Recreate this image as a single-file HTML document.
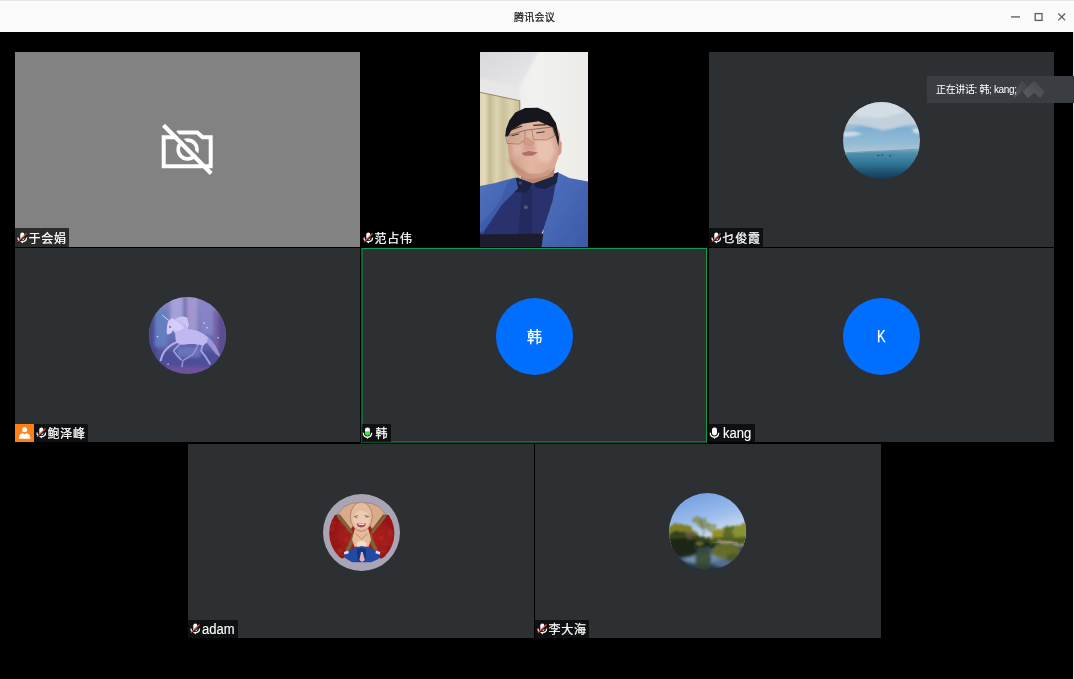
<!DOCTYPE html>
<html lang="zh-CN">
<head>
<meta charset="utf-8">
<title>腾讯会议</title>
<style>
*{box-sizing:border-box;margin:0;padding:0}
html,body{width:1074px;height:679px;overflow:hidden;background:#000}
body{position:relative;font-family:"Liberation Sans","Noto Sans CJK SC",sans-serif;color:#fff}
.abs{position:absolute}
#titlebar{position:absolute;left:0;top:0;width:1074px;height:32px;background:#fafafa;border-top:1px solid #e6e6e6}
#title{position:absolute;left:0;top:11px;width:1069px;text-align:center;font-size:10px;line-height:12px;letter-spacing:.3px;color:#111;-webkit-text-stroke:.2px #111}
#rborder{position:absolute;left:1073px;top:32px;width:1px;height:647px;background:#dcdcdc}
.tile{position:absolute;background:#2d3033;overflow:hidden}
.label{position:absolute;left:0;bottom:0;height:18px;padding:0 2.6px 0 13.5px;background:rgba(0,0,0,.66);font-size:12px;line-height:21px;letter-spacing:.7px;white-space:nowrap;overflow:hidden;color:#fff}
.label svg{position:absolute;left:2px;top:3px}
.label.lat{font-size:14px;line-height:19px;letter-spacing:0;padding-right:4px;-webkit-text-stroke:.1px #fff}
.label.lat span{display:inline-block;transform:scaleX(.93);transform-origin:0 50%;margin-right:-2.2px}
.label svg.um{left:0.3px}
.r1 .label{height:19px;line-height:22px}
.r1 .label svg{top:3.6px}
#toast{position:absolute;left:927px;top:76px;width:147px;height:27px;background:#3a3d42;font-size:10px;line-height:27px;letter-spacing:-.35px;color:#fff;white-space:nowrap}
#toast span{position:absolute;left:9px;top:0}
.label,#title,#toast span,.blue{will-change:transform}
.label,.blue{-webkit-text-stroke:.25px #fff}
.g{position:absolute;display:block}
.host{position:absolute;left:0;bottom:0;width:19px;height:18px;background:#ff8018}
.av{position:absolute;width:77px;height:77px;border-radius:50%;overflow:hidden}
.av svg{display:block}
.blue{background:#006fff;text-align:center;font-size:15px;line-height:77px;color:#fff}
</style>
</head>
<body>

<svg width="0" height="0" style="position:absolute">
  <defs>
    <symbol id="mic" viewBox="0 0 11 13">
      <rect x="3" y="0.4" width="5" height="8" rx="2.3" fill="#fff"/>
      <path d="M1.3 5.7 C1.3 11.6 9.7 11.6 9.7 5.7" fill="none" stroke="#fff" stroke-width="1.2"/>
      <path d="M4.2 10.2 L6.8 10.2 L5.5 12.1 Z" fill="#fff"/>
    </symbol>
    <symbol id="micg" viewBox="0 0 11 13">
      <clipPath id="mcb"><rect x="3" y="0.4" width="5" height="8" rx="2.3"/></clipPath>
      <rect x="3" y="0.4" width="5" height="8" rx="2.3" fill="#fff"/>
      <rect x="3" y="4.3" width="5" height="5" fill="#3fe03f" clip-path="url(#mcb)"/>
      <path d="M1.3 5.7 C1.3 11.6 9.7 11.6 9.7 5.7" fill="none" stroke="#fff" stroke-width="1.2"/>
      <path d="M4.2 10.2 L6.8 10.2 L5.5 12.1 Z" fill="#fff"/>
    </symbol>
    <symbol id="micm" viewBox="0 0 11 13">
      <rect x="3.3" y="0.4" width="4" height="7.8" rx="2" fill="#fff"/>
      <path d="M1 5.6 C1 11 9.6 11 9.6 5.6" fill="none" stroke="#f4f4f4" stroke-width="1.25"/>
      <path d="M4.1 9.6 L6.5 9.6 L5.3 11.4 Z" fill="#fff"/>
      <path d="M1.7 10.4 L10.1 2.5" stroke="#151515" stroke-width="1.3" fill="none"/>
      <path d="M0.9 9.7 L9.6 1.5" stroke="#e24a40" stroke-width="1.05" fill="none"/>
    </symbol>
  </defs>
</svg>
<div id="titlebar">
  <div id="title">腾讯会议</div>
  <svg class="abs" style="left:1004px;top:8px" width="68" height="16" viewBox="1004 9 68 16">
    <rect x="1011" y="16.2" width="9" height="1.4" fill="#64646c"/>
    <rect x="1035.2" y="13.6" width="6.8" height="6.8" fill="none" stroke="#5c5c66" stroke-width="1.3"/>
    <path d="M1058.3 13.5 L1065.2 20.4 M1065.2 13.5 L1058.3 20.4" stroke="#5c5c66" stroke-width="1.2" fill="none"/>
  </svg>
</div>

<!-- row 1 -->
<div class="tile r1" id="t1" style="left:15px;top:52px;width:345px;height:195px;background:#828282"><svg class="abs" style="left:140px;top:68px" width="70" height="60" viewBox="155 120 70 60">
  <g fill="none" stroke="#fff">
    <path d="M163.7 137.3 L174.5 137.3 L178.2 132.6 L197.3 132.6 L202.6 137.3 L210.7 137.3 L210.7 166.3 L163.7 166.3 Z" stroke-width="4"/>
    <circle cx="187.6" cy="149.5" r="9.4" stroke-width="3.6"/>
    <path d="M171.6 128.7 L204.2 161.6" stroke="#828282" stroke-width="2.8"/>
    <path d="M163.5 125.3 L211.2 173.6" stroke-width="4.2"/>
  </g>
</svg><div class="label"><svg width="11" height="13"><use href="#micm"/></svg>于会娟</div></div>
<div class="tile r1" id="t2" style="left:361px;top:52px;width:346px;height:195px;background:#000"><svg class="abs" style="left:119px;top:0" width="108" height="195" viewBox="0 0 108 195">
<defs>
<linearGradient id="vwall" x1="0" y1="0" x2="1" y2="0"><stop offset="0" stop-color="#e6e6e6"/><stop offset=".5" stop-color="#f1f1ef"/><stop offset="1" stop-color="#ecebe6"/></linearGradient>
<linearGradient id="vceil" x1="0" y1="0" x2="1" y2="1"><stop offset="0" stop-color="#d6d6da"/><stop offset="1" stop-color="#e9e9ea"/></linearGradient>
<linearGradient id="vcur" x1="0" y1="0" x2="1" y2="0"><stop offset="0" stop-color="#d9d0ad"/><stop offset=".18" stop-color="#e3dbbd"/><stop offset=".3" stop-color="#c4ba93"/><stop offset=".45" stop-color="#ddd4b2"/><stop offset=".62" stop-color="#cbc19b"/><stop offset=".8" stop-color="#dcd3b0"/><stop offset="1" stop-color="#c9bf99"/></linearGradient>
<linearGradient id="vjk" x1="0" y1="0" x2="1" y2="1"><stop offset="0" stop-color="#5273bd"/><stop offset=".5" stop-color="#4566b4"/><stop offset="1" stop-color="#3a58a6"/></linearGradient>
<linearGradient id="vskin" x1="0" y1="0" x2="1" y2="0"><stop offset="0" stop-color="#cf9f8a"/><stop offset=".45" stop-color="#e2b6a2"/><stop offset="1" stop-color="#d6a590"/></linearGradient>
<filter id="vb" x="-5%" y="-5%" width="110%" height="110%"><feGaussianBlur stdDeviation="0.75"/></filter>
<filter id="vb2" x="-5%" y="-5%" width="110%" height="110%"><feGaussianBlur stdDeviation="1.4"/></filter>
<clipPath id="vclip"><rect width="108" height="195"/></clipPath>
</defs>
<g clip-path="url(#vclip)">
<rect width="108" height="195" fill="url(#vwall)"/>
<g filter="url(#vb2)">
<path d="M-6.0 -4.0 L60.1 -4.0 L39.1 35.4 L-3.0 26.0 L-6.0 25.3 Z" fill="url(#vceil)"/>
<path d="M-3.0 26.0 L39.1 35.4 L39.8 48.9 L-3.0 39.9 Z" fill="#e7e7e7"/>
</g><g filter="url(#vb)">
<path d="M-3.0 39.6 L39.8 48.6 L39.8 101.1 L39.8 146.2 L-3.0 146.2 Z" fill="url(#vcur)"/>
<path d="M-3.0 39.7 L39.8 48.7 L39.8 59.1" fill="none" stroke="#8f8058" stroke-width=".9"/>
<path d="M-2.5 134.6 L15.2 131.0 L35.5 125.4 L40.0 136.3 L22.3 152.2 L1.1 184.0 L-2.5 184.0 Z" fill="url(#vjk)"/>
<path d="M71.8 124.3 L78.0 120.4 L89.4 126.1 L110.6 130.1 L110.6 198.2 L59.4 198.2 L63.8 177.0 L71.8 148.7 Z" fill="url(#vjk)"/>
<path d="M26.7 139.0 L52.3 131.0 L77.1 124.3 L72.6 148.7 L63.8 177.0 L60.3 184.0 L-0.7 184.0 L4.6 169.9 L20.5 150.5 Z" fill="#29336e"/>
<path d="M41.7 138.1 L52.3 136.3 L52.3 182.3 L38.2 182.3 Z" fill="#222b5e"/>
<path d="M25.8 137.2 L30.2 129.3 L37.3 125.4 L53.2 131.0 L47.0 140.2 L29.3 140.2 Z" fill="#1b2142"/>
<path d="M53.2 131.0 L71.8 122.5 L78.5 120.1 L76.7 131.0 L64.7 137.2 L55.9 135.4 Z" fill="#1b2142"/>
<path d="M27.6 131.0 L35.5 125.7 L38.2 136.3 L22.3 152.2 L2.0 182.3 L0.2 173.4 L20.5 148.7 Z" fill="#3d5caa"/>
<path d="M-2.5 182.6 L63.3 181.6 L61.2 198.2 L-2.5 198.2 Z" fill="#1b1f2e"/>
<circle cx="40.3" cy="131.0" r="1.7" fill="#3a4466"/>
<circle cx="45.8" cy="155.2" r="2" fill="#505a6e"/>
<path d="M43.5 116.9 L75.3 113.3 L73.5 124.3 L53.2 131.4 L40.3 126.6 Z" fill="#b98670"/>
<path d="M28.3 72.7 L27.2 88.6 L28.6 102.7 L32.0 113.3 L38.2 122.2 L47.0 127.1 L57.6 126.1 L68.2 123.1 L74.4 116.0 L78.5 104.5 L80.6 92.1 L79.9 81.5 L76.2 73.6 L68.2 65.6 L47.0 63.9 L33.8 67.4 Z" fill="url(#vskin)"/>
</g><g filter="url(#vb2)">
<path d="M28.6 104.5 L34.7 111.6 L47.0 121.3 L57.6 124.3 L52.3 127.1 L41.7 125.4 L33.8 117.8 L29.3 109.8 Z" fill="#b9806c" opacity=".75"/>
<path d="M55.9 88.6 L71.8 86.8 L75.3 99.2 L68.2 111.6 L57.6 108.0 Z" fill="#ecc6b4" opacity=".8"/>
<path d="M32.0 90.4 L40.8 91.3 L41.7 102.7 L33.8 104.5 Z" fill="#e6bba8" opacity=".7"/>
<path d="M44.4 94.8 L55.0 94.8 L55.9 97.8 L43.5 97.8 Z" fill="#c08a76" opacity=".7"/>
</g><g filter="url(#vb)">
<path d="M78.5 87.7 L81.8 90.4 L81.3 101.0 L78.1 104.5 Z" fill="#cf9880"/>
<path d="M33.8 116.0 L47.0 122.2 L61.2 121.3 L71.8 116.0 L68.2 123.1 L57.6 126.3 L47.0 127.1 L38.2 122.5 Z" fill="#c8957f" opacity=".8"/>
<path d="M25.2 83.9 L26.1 77.1 L29.3 68.4 L35.3 60.6 L45.1 56.1 L57.8 55.8 L69.1 60.6 L75.9 71.1 L79.0 86.1 L78.4 94.4 L76.3 86.1 L72.4 75.3 L58.6 69.3 L42.1 71.8 L31.5 78.3 L27.8 84.6 Z" fill="#17171c"/>
<path d="M25.2 84.6 L45.1 78.3 L72.9 74.9 L76.6 84.6" fill="none" stroke="#4a4242" stroke-width=".7" opacity=".85"/>
<path d="M25.8 84.6 L27.3 91.4 L39.1 92.1 L44.8 87.6 L45.1 78.6" fill="none" stroke="#5a5050" stroke-width=".55" opacity=".8"/>
<path d="M51.8 77.9 L53.3 87.6 L66.1 87.9 L74.4 83.9 L72.9 75.2" fill="none" stroke="#5a5050" stroke-width=".55" opacity=".8"/>
<path d="M31.5 83.9 L39.1 81.9" fill="none" stroke="#4a3630" stroke-width="1"/>
<path d="M56.3 80.9 L64.6 79.8" fill="none" stroke="#4a3630" stroke-width="1"/>
<path d="M30.8 77.9 L42.1 74.1" fill="none" stroke="#3a2a26" stroke-width="1.1"/>
<path d="M53.3 73.4 L66.1 72.6" fill="none" stroke="#3a2a26" stroke-width="1.1"/>
<path d="M42.6 90.4 L47.0 85.1 L55.0 90.4 L53.2 94.3 L45.3 94.3 Z" fill="#cf9a86"/>
<path d="M41.4 101.0 L48.8 98.9 L58.0 100.6 L52.3 103.8 L44.4 103.8 Z" fill="#b46c6c"/>
</g></g></svg><div class="label"><svg width="11" height="13"><use href="#micm"/></svg>范占伟</div></div>
<div class="tile r1" id="t3" style="left:709px;top:52px;width:345px;height:195px"><div class="av" style="left:134px;top:49.5px"><svg width="77" height="77" viewBox="0 0 77 77">
<defs>
<linearGradient id="a3sky" x1="0" y1="0" x2="0" y2="1"><stop offset="0" stop-color="#c6d3dd"/><stop offset=".38" stop-color="#b4c8d8"/><stop offset=".5" stop-color="#7fb0d2"/><stop offset=".78" stop-color="#93bbd6"/><stop offset="1" stop-color="#b4cad8"/></linearGradient>
<linearGradient id="a3sea" x1="0" y1="0" x2="0" y2="1"><stop offset="0" stop-color="#78a9bf"/><stop offset=".12" stop-color="#4f90ad"/><stop offset=".45" stop-color="#2f7594"/><stop offset=".75" stop-color="#1c4f70"/><stop offset="1" stop-color="#13324e"/></linearGradient>
<filter id="a3b" x="-10%" y="-10%" width="120%" height="120%"><feGaussianBlur stdDeviation="1.3"/></filter>
<filter id="a3c" x="-10%" y="-10%" width="120%" height="120%"><feGaussianBlur stdDeviation="0.5"/></filter>
</defs>
<rect width="77" height="53" fill="url(#a3sky)"/>
<g filter="url(#a3b)">
<path d="M-3 -3 L80 -3 L80 21 L62 23 L48 27 L40 28.5 L31 26 L18 22.5 L6 22 L-3 26 Z" fill="#c2d0db"/>
<path d="M8 2 L50 0 L62 10 L40 16 L14 15 Z" fill="#d2dde5"/>
<path d="M0 30 L10 29.5 L19 31.5 L12 34 L0 35 Z" fill="#d0dde8"/>
<path d="M69 27 L78 25 L78 32 L71 31 Z" fill="#cfdce6"/>
<path d="M0 26 L8 23 L16 25 L4 28 Z" fill="#9fc0d8"/>
</g>
<g filter="url(#a3c)">
<path d="M-2 51.3 L79 47.2 L79 79 L-2 79 Z" fill="url(#a3sea)"/>
<path d="M-2 50.6 L79 46.6 L79 47.6 L-2 51.8 Z" fill="#6f9db6"/>
<ellipse cx="35.3" cy="53.3" rx="1.2" ry=".5" fill="#1d3c52"/><ellipse cx="39.2" cy="52.9" rx="1.2" ry=".5" fill="#1d3c52"/><ellipse cx="47.2" cy="53.8" rx="1.2" ry=".5" fill="#1d3c52"/>
</g>
</svg></div><div class="label"><svg width="11" height="13"><use href="#micm"/></svg>乜俊霞</div></div>
<!-- row 2 -->
<div class="tile" id="t4" style="left:15px;top:248px;width:345px;height:194px"><div class="av" style="left:134px;top:49px"><svg width="77" height="77" viewBox="0 0 77 77">
<defs>
<linearGradient id="a4bg" x1="0" y1="0" x2="0" y2="1"><stop offset="0" stop-color="#8a89c4"/><stop offset=".45" stop-color="#6c74b8"/><stop offset=".75" stop-color="#50569e"/><stop offset="1" stop-color="#584a90"/></linearGradient>
<filter id="a4b" x="-10%" y="-10%" width="120%" height="120%"><feGaussianBlur stdDeviation="1.5"/></filter>
<filter id="a4c" x="-10%" y="-10%" width="120%" height="120%"><feGaussianBlur stdDeviation="0.75"/></filter>
</defs>
<rect width="77" height="77" fill="url(#a4bg)"/>
<g filter="url(#a4b)">
<rect x="-1.5" y="-1.0" width="9.4" height="80.0" fill="#484488" opacity="0.9"/>
<rect x="5.6" y="13.1" width="12.9" height="36.6" fill="#6280c2" opacity="0.9"/>
<rect x="21.5" y="-1.0" width="12.3" height="27.1" fill="#a7a1d9" opacity="0.95"/>
<rect x="34.4" y="-1.0" width="3.0" height="30.6" fill="#686aae" opacity="0.8"/>
<rect x="38.0" y="-1.0" width="10.6" height="35.3" fill="#a598d0" opacity="0.9"/>
<rect x="50.9" y="6.1" width="13.0" height="31.8" fill="#8a86c8" opacity="0.8"/>
<rect x="64.5" y="13.1" width="4.7" height="47.2" fill="#775fa0" opacity="0.9"/>
<rect x="69.2" y="16.7" width="9.3" height="48.3" fill="#5a4c90" opacity="0.95"/>
<rect x="10.3" y="54.4" width="58.9" height="15.3" fill="#4b4e98" opacity="0.8"/>
<rect x="16.2" y="69.7" width="48.3" height="9.3" fill="#70549e" opacity="0.8"/>
<rect x="28.0" y="49.7" width="23.5" height="10.6" fill="#6d7ac2" opacity="0.8"/>
</g><g filter="url(#a4c)" stroke-linecap="round" stroke-linejoin="round">
<path d="M 56.8 38.5 C 62.7 41.4 68.0 49.7 71.5 59.7 C 68.0 59.1 64.5 54.4 62.1 50.8 C 60.4 48.5 58.0 46.1 56.8 44.9 Z" fill="#a69cde" opacity=".85"/>
<path d="M 29.1 44.4 C 23.2 46.7 17.9 50.8 15.0 55.0 C 13.2 57.9 12.4 60.9 11.7 63.2" fill="none" stroke="#b2a9e6" stroke-width="2.1"/>
<path d="M 32.1 46.1 C 28.0 49.7 25.6 52.0 24.7 54.1 C 26.8 57.3 29.7 60.3 32.1 62.6" fill="none" stroke="#a39bdb" stroke-width="1.7"/>
<path d="M 49.2 47.3 C 47.4 52.0 45.0 56.1 43.3 57.9 C 39.7 60.3 36.2 62.0 33.8 63.6 L 33.0 69.7" fill="none" stroke="#988fd0" stroke-width="1.6"/>
<path d="M 54.8 45.5 C 53.3 48.5 52.5 51.4 52.1 53.8 C 55.1 57.3 58.6 62.6 60.9 66.7" fill="none" stroke="#a69ee0" stroke-width="1.9"/>
<path d="M 17.9 37.3 C 17.4 34.3 17.9 27.3 19.1 24.3 L 22.7 20.8 L 26.2 22.6 C 32.7 23.2 36.2 28.5 39.1 32.0 C 45.6 32.6 52.7 34.3 58.6 40.2 C 59.2 43.8 57.4 47.3 53.3 48.5 C 48.0 47.3 43.3 46.7 38.6 47.3 C 33.8 48.5 29.7 47.3 27.4 44.9 C 26.2 41.4 26.2 39.1 26.2 36.7 L 23.8 33.2 C 23.2 35.5 21.5 37.9 17.9 37.3 Z" fill="#c1b8ef"/>
<path d="M 18.3 36.7 C 17.7 33.8 18.3 27.3 19.5 24.7 L 22.7 21.6 L 25.8 23.2 C 29.4 24.3 32.7 27.3 35.0 30.8 C 32.7 33.2 29.1 34.3 26.5 34.3 L 24.2 32.0 C 23.2 34.9 21.5 36.9 18.3 36.7 Z" fill="#d4cdf8"/>
<path d="M 25.8 22.6 C 29.7 19.3 35.6 18.4 38.8 21.2 C 38.1 22.6 39.5 24.7 40.0 27.9 C 39.1 29.9 38.6 31.0 39.1 32.0 C 36.2 28.5 32.7 24.3 29.4 23.7 Z" fill="#cbc4f3"/>
<path d="M 19.5 23.2 L 13.6 18.4" fill="none" stroke="#dad4fa" stroke-width="1"/>
<circle cx="21.1" cy="29.9" r=".9" fill="#5a508a"/>
<circle cx="8.5" cy="39.6" r=".8" fill="#e0dcfa" opacity=".9"/>
<circle cx="55.1" cy="26.1" r=".8" fill="#e0dcfa" opacity=".9"/>
<circle cx="58.0" cy="30.8" r=".8" fill="#e0dcfa" opacity=".9"/>
<circle cx="19.1" cy="67.3" r=".8" fill="#e0dcfa" opacity=".9"/>
<circle cx="69.2" cy="40.8" r=".8" fill="#e0dcfa" opacity=".9"/>
</g></svg></div><div class="host"><svg width="19" height="19" viewBox="0 0 19 19" style="position:absolute;left:0;top:-0.4px"><circle cx="9.65" cy="5.8" r="2.5" fill="#fff"/><path d="M3.9 14.7 C3.9 11 6 9.4 8 9 L9.65 10.6 L11.3 9 C13.3 9.4 15.4 11 15.4 14.7 Z" fill="#fff"/></svg></div><div class="label" style="left:19px"><svg width="11" height="13"><use href="#micm"/></svg>鲍泽峰</div></div>
<div class="tile" id="t5" style="left:361px;top:248px;width:346px;height:195px"><i class="g" style="left:0;top:0;width:346px;height:1px;background:#08a050"></i><i class="g" style="left:345px;top:0;width:1px;height:195px;background:#08a050"></i><i class="g" style="left:0;top:0;width:1px;height:195px;background:#05582a"></i><i class="g" style="left:1px;top:1px;width:1px;height:193px;background:#1a6a40"></i><i class="g" style="left:1px;top:193px;width:344px;height:1px;background:#1a6a40"></i><i class="g" style="left:0;top:194px;width:346px;height:1px;background:#05502a"></i><div class="av blue" style="left:135px;top:49.5px">韩</div><div class="label" style="left:1px;bottom:1px"><svg class="um" width="11" height="13"><use href="#micg"/></svg>韩</div></div>
<div class="tile" id="t6" style="left:709px;top:248px;width:345px;height:194px"><div class="av blue" style="left:133.5px;top:49.5px;font-size:16px"><span style="display:inline-block;transform:scaleX(.8)">K</span></div><div class="label lat"><svg class="um" width="11" height="13"><use href="#mic"/></svg><span>kang</span></div></div>
<!-- row 3 -->
<div class="tile" id="t7" style="left:188px;top:444px;width:346px;height:194px"><div class="av" style="left:134.5px;top:49.5px"><svg width="77" height="77" viewBox="0 0 77 77">
<defs>
<clipPath id="a7clip"><circle cx="38.8" cy="39.2" r="32.6"/></clipPath>
<radialGradient id="a7red" cx=".5" cy=".5" r=".6"><stop offset="0" stop-color="#b42020"/><stop offset="1" stop-color="#8e1616"/></radialGradient>
<filter id="a7b" x="-10%" y="-10%" width="120%" height="120%"><feGaussianBlur stdDeviation="0.55"/></filter>
</defs>
<rect width="77" height="77" fill="#a9a5b5"/>
<g filter="url(#a7b)"><g clip-path="url(#a7clip)">
<rect width="77" height="77" fill="#a9a5b5"/>
<path d="M5.6 20.9 L78.6 20.9 L78.6 64.5 L57.4 64.5 L38.6 53.9 L19.7 64.5 L5.6 64.5 Z" fill="url(#a7red)"/>
<circle cx="61.2" cy="56.8" r="1.6" fill="none" stroke="#c43a2a" stroke-width=".6" opacity=".7"/>
<circle cx="16.9" cy="56.5" r="1.6" fill="none" stroke="#c43a2a" stroke-width=".6" opacity=".7"/>
<circle cx="16.8" cy="59.6" r="1.6" fill="none" stroke="#c43a2a" stroke-width=".6" opacity=".7"/>
<circle cx="67.1" cy="38.5" r="1.6" fill="none" stroke="#c43a2a" stroke-width=".6" opacity=".7"/>
<circle cx="24.2" cy="55.1" r="1.6" fill="none" stroke="#c43a2a" stroke-width=".6" opacity=".7"/>
<circle cx="17.8" cy="30.1" r="1.6" fill="none" stroke="#c43a2a" stroke-width=".6" opacity=".7"/>
<circle cx="26.0" cy="53.5" r="1.6" fill="none" stroke="#c43a2a" stroke-width=".6" opacity=".7"/>
<circle cx="62.3" cy="49.7" r="1.6" fill="none" stroke="#c43a2a" stroke-width=".6" opacity=".7"/>
<circle cx="58.3" cy="58.5" r="1.6" fill="none" stroke="#c43a2a" stroke-width=".6" opacity=".7"/>
<circle cx="10.5" cy="29.2" r="1.6" fill="none" stroke="#c43a2a" stroke-width=".6" opacity=".7"/>
<circle cx="69.7" cy="52.0" r="1.6" fill="none" stroke="#c43a2a" stroke-width=".6" opacity=".7"/>
<circle cx="58.8" cy="44.7" r="1.6" fill="none" stroke="#c43a2a" stroke-width=".6" opacity=".7"/>
<circle cx="18.0" cy="56.4" r="1.6" fill="none" stroke="#c43a2a" stroke-width=".6" opacity=".7"/>
<circle cx="68.9" cy="59.4" r="1.6" fill="none" stroke="#c43a2a" stroke-width=".6" opacity=".7"/>
<circle cx="53.6" cy="58.5" r="1.6" fill="none" stroke="#c43a2a" stroke-width=".6" opacity=".7"/>
<circle cx="25.0" cy="46.8" r="1.6" fill="none" stroke="#c43a2a" stroke-width=".6" opacity=".7"/>
<circle cx="26.6" cy="26.7" r="1.6" fill="none" stroke="#c43a2a" stroke-width=".6" opacity=".7"/>
<circle cx="24.0" cy="36.6" r="1.6" fill="none" stroke="#c43a2a" stroke-width=".6" opacity=".7"/>
<circle cx="9.2" cy="34.8" r="1.6" fill="none" stroke="#c43a2a" stroke-width=".6" opacity=".7"/>
<circle cx="22.4" cy="45.8" r="1.6" fill="none" stroke="#c43a2a" stroke-width=".6" opacity=".7"/>
<circle cx="57.9" cy="43.9" r="1.6" fill="none" stroke="#c43a2a" stroke-width=".6" opacity=".7"/>
<circle cx="25.3" cy="59.7" r="1.6" fill="none" stroke="#c43a2a" stroke-width=".6" opacity=".7"/>
<circle cx="13.8" cy="58.0" r="1.6" fill="none" stroke="#c43a2a" stroke-width=".6" opacity=".7"/>
<circle cx="56.2" cy="29.9" r="1.6" fill="none" stroke="#c43a2a" stroke-width=".6" opacity=".7"/>
<circle cx="67.7" cy="37.2" r="1.6" fill="none" stroke="#c43a2a" stroke-width=".6" opacity=".7"/>
<circle cx="67.6" cy="40.7" r="1.6" fill="none" stroke="#c43a2a" stroke-width=".6" opacity=".7"/>
<path d="M13.2 19.7 L16.8 20.9 L29.7 37.4 L27.4 45.6 L20.3 60.9 L23.2 61.9 L32.1 45.6 L38.6 43.3 L45.0 45.6 L54.5 61.9 L57.4 60.9 L49.8 45.6 L48.0 37.4 L60.9 20.9 L63.9 19.7 L62.7 23.8 L50.3 39.1 L38.6 41.5 L27.4 39.1 L14.4 23.8 Z" fill="#7d6436"/>
<path d="M36.2 8.9 L28.5 9.3 L21.5 12.6 L15.6 19.1 L28.0 35.0 L32.7 28.0 L32.7 18.5 Z" fill="#d9ab8c" stroke="#8a6a48" stroke-width=".5"/>
<path d="M40.9 8.9 L48.6 9.3 L55.6 12.6 L61.5 19.1 L49.2 35.0 L44.4 28.0 L44.4 18.5 Z" fill="#d9ab8c" stroke="#8a6a48" stroke-width=".5"/>
<path d="M32.1 33.8 L45.0 33.8 L48.0 45.6 L45.6 52.7 L31.5 52.7 L29.1 45.6 Z" fill="#e4bc9c"/>
<ellipse cx="38.6" cy="50.3" rx="5" ry="3.6" fill="#f0dac8"/>
<path d="M32.7 39.7 L38.6 45.0 L44.4 39.7" fill="none" stroke="#9a7050" stroke-width=".6"/>
<ellipse cx="38.3" cy="22.7" rx="11" ry="14.6" fill="#e6bc9e" stroke="#8a6a48" stroke-width=".6"/>
<ellipse cx="38.3" cy="25.6" rx="8" ry="9" fill="#eecbb0"/>
<path d="M30.9 22.7 L35.0 21.5" fill="none" stroke="#6a4a3a" stroke-width=".7"/>
<path d="M41.5 21.5 L46.2 22.7" fill="none" stroke="#6a4a3a" stroke-width=".7"/>
<ellipse cx="43.9" cy="22.7" rx="1.6" ry=".9" fill="#8a7a90"/>
<ellipse cx="33.3" cy="23.5" rx="1.4" ry=".8" fill="#9a8070"/>
<path d="M33.3 29.4 L43.3 29.4 L41.5 32.7 L38.0 33.6 L35.0 32.7 Z" fill="#a8485a"/>
<path d="M35.0 29.7 L41.9 29.7 L40.9 31.0 L36.0 31.0 Z" fill="#f4e4e0"/>
<path d="M20.9 58.8 L32.7 53.6 L38.6 52.1 L45.6 53.6 L57.4 58.8 L55.6 65.1 L48.0 68.2 L29.1 68.2 L22.1 63.9 Z" fill="#2148a6"/>
<path d="M33.8 55.1 L38.6 53.9 L43.3 55.1 L42.1 68.0 L35.0 68.0 Z" fill="#17357e"/>
<path d="M20.9 58.0 L25.4 56.8 L25.8 59.2 L21.5 60.4 Z" fill="#e8e4ee"/>
<path d="M52.9 56.8 L57.4 58.0 L56.8 60.4 L52.5 59.2 Z" fill="#e8e4ee"/>
<path d="M38.0 58.0 L39.7 58.0 L41.9 66.2 L39.1 68.0 L36.4 66.2 Z" fill="#dcb0bc"/>
</g></g></svg></div><div class="label lat"><svg width="11" height="13"><use href="#micm"/></svg><span>adam</span></div></div>
<div class="tile" id="t8" style="left:535px;top:444px;width:346px;height:194px"><div class="av" style="left:134px;top:49px"><svg width="77" height="77" viewBox="0 0 77 77">
<defs>
<linearGradient id="a8sky" x1=".2" y1="0" x2=".6" y2="1"><stop offset="0" stop-color="#6f9de2"/><stop offset=".5" stop-color="#9dbdec"/><stop offset=".85" stop-color="#d4e2f3"/><stop offset="1" stop-color="#e6eef6"/></linearGradient>
<linearGradient id="a8w" x1="0" y1="0" x2="0" y2="1"><stop offset="0" stop-color="#2a3e50"/><stop offset=".5" stop-color="#45627f"/><stop offset="1" stop-color="#1d2e44"/></linearGradient>
<filter id="a8b" x="-10%" y="-10%" width="120%" height="120%"><feTurbulence type="fractalNoise" baseFrequency="0.22" numOctaves="2" seed="4" result="n"/><feDisplacementMap in="SourceGraphic" in2="n" scale="5" xChannelSelector="R" yChannelSelector="G"/><feGaussianBlur stdDeviation="0.8"/></filter>
<filter id="a8c" x="-10%" y="-10%" width="120%" height="120%"><feGaussianBlur stdDeviation="1.6"/></filter>
</defs>
<rect width="77" height="54" fill="url(#a8sky)"/>
<rect y="50" width="77" height="27" fill="url(#a8w)"/>
<g filter="url(#a8c)">
<ellipse cx="34.3" cy="65.6" rx="20.0" ry="5.3" fill="#7a96b4" opacity="0.9"/>
<ellipse cx="54.4" cy="69.7" rx="10.6" ry="4.7" fill="#58769a" opacity="0.8"/>
<ellipse cx="13.1" cy="57.9" rx="15.3" ry="7.1" fill="#1a2418" opacity="0.95"/>
<ellipse cx="34.3" cy="66.2" rx="8.2" ry="11.2" fill="#36442c" opacity="0.85"/>
<ellipse cx="56.7" cy="57.9" rx="14.1" ry="8.2" fill="#6a7024" opacity="0.9"/>
<ellipse cx="65.0" cy="65.0" rx="8.2" ry="4.7" fill="#4a5424" opacity="0.8"/>
</g><g filter="url(#a8b)">
<ellipse cx="26.7" cy="26.7" rx="3.5" ry="3.3" fill="#7e8a48" opacity="0.75"/>
<ellipse cx="33.8" cy="30.2" rx="5.7" ry="4.9" fill="#7a8644" opacity="0.7"/>
<ellipse cx="42.0" cy="34.3" rx="4.2" ry="4.7" fill="#808a4a" opacity="0.7"/>
<path d="M34.3 47.3 L34.1 34.3 L30.8 25.5" fill="none" stroke="#4a4a2a" stroke-width=".8"/>
<path d="M34.2 37.9 L40.2 30.8" fill="none" stroke="#4a4a2a" stroke-width=".6"/>
<path d="M-1.0 33.2 L6.1 30.6 L14.3 31.4 L21.4 34.3 L28.5 39.6 L29.6 48.5 L-1.0 49.7 Z" fill="#7e8028"/>
<path d="M-1.0 40.2 L9.6 38.5 L19.0 39.6 L28.5 42.6 L34.3 43.8 L44.9 46.1 L46.1 52.6 L-1.0 54.4 Z" fill="#36421e"/>
<ellipse cx="21.4" cy="41.4" rx="4.9" ry="3.5" fill="#6a5846" opacity="0.85"/>
<path d="M-1.0 46.1 L13.1 45.5 L26.1 47.3 L46.1 50.8 L45.5 53.8 L-1.0 55.6 Z" fill="#1e2814"/>
<path d="M42.8 39.1 L47.3 36.1 L54.4 36.5 L55.6 47.3 L43.8 47.3 Z" fill="#948f28"/>
<path d="M53.8 35.5 L59.1 32.6 L65.0 34.3 L66.2 46.7 L54.4 47.3 Z" fill="#5c6c26"/>
<path d="M63.8 35.5 L69.7 31.4 L79.0 30.2 L79.0 48.5 L64.4 47.3 Z" fill="#8a9230"/>
<path d="M41.4 44.4 L79.0 44.4 L79.0 51.4 L48.5 50.4 L41.4 50.8 Z" fill="#4e5a22"/>
<path d="M47.3 47.5 L65.0 49.1 L76.8 52.0 L75.6 54.1 L62.6 51.8 L48.5 49.1 Z" fill="#a8987a"/>
<ellipse cx="31.0" cy="50.5" rx="3.8" ry="1.4" fill="#7c7c2a" opacity="0.9"/>
</g></svg></div><div class="label"><svg width="11" height="13"><use href="#micm"/></svg>李大海</div></div>


<div id="rborder"></div>
<div id="toast">
  <svg class="abs" style="left:83px;top:2px" width="40" height="23" viewBox="1010 78 40 23">
    <defs>
      <linearGradient id="lg1" x1="0" y1="1" x2="1" y2="0"><stop offset="0" stop-color="#5a5d60"/><stop offset="1" stop-color="#43464a"/></linearGradient>
      <linearGradient id="lg2" x1="0" y1="1" x2="1" y2="0"><stop offset="0" stop-color="#505356"/><stop offset="1" stop-color="#44474b"/></linearGradient>
    </defs>
    <path d="M1021.9 80.4 L1026.6 85.6 L1015.4 98 L1013.2 96 Z" fill="url(#lg2)"/>
    <path d="M1021.9 80.4 L1027.2 86.2 L1022.4 91.4 Z" fill="#45484c"/>
    <path d="M1034.2 80.9 L1044.5 91.6 L1040.3 98 L1034.2 92.4 L1028 98 L1022.4 91.6 Z" fill="url(#lg1)"/>
  </svg>
  <span>正在讲话: 韩; kang;</span>
</div>
</body>
</html>
